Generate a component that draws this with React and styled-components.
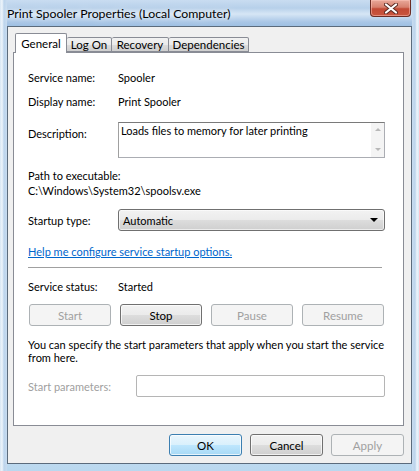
import React from 'react';
import styled, {createGlobalStyle} from 'styled-components';

const FONT = `Lato, "Noto Sans", "Liberation Sans", sans-serif`;

const GlobalStyle = createGlobalStyle`
  html, body {
    margin: 0;
    padding: 0;
    background: #ffffff;
  }
  body {
    font-family: ${FONT};
    font-size: 11px;
  }
`;

function App() {
    return (
        <Window>
            <GlobalStyle/>
            <TitleBar>
                <Title>Print Spooler Properties (Local Computer)</Title>
                <CloseButton>
                    <svg width="14" height="11" viewBox="0 0 14 11">
                        <path d="M2 1.5 L12 9.5 M12 1.5 L2 9.5" stroke="#5a2a22" strokeWidth="4" strokeLinecap="round"/>
                        <path d="M2 1.5 L12 9.5 M12 1.5 L2 9.5" stroke="#ffffff" strokeWidth="2.2" strokeLinecap="round"/>
                    </svg>
                </CloseButton>
            </TitleBar>

            <Client>
                <TabStrip>
                    <Tab $selected $width={52}>General</Tab>
                    <Tab $width={45}>Log On</Tab>
                    <Tab $width={57}>Recovery</Tab>
                    <Tab $width={80}>Dependencies</Tab>
                </TabStrip>

                <Panel>
                    <Row $top={17}>
                        <Label>Service name:</Label>
                        <Value>Spooler</Value>
                    </Row>
                    <Row $top={9}>
                        <Label>Display name:</Label>
                        <Value>Print Spooler</Value>
                    </Row>
                    <Row $top={13} $alignTop>
                        <Label style={{paddingTop: 4}}>Description:</Label>
                        <TextArea>
                            <span>Loads files to memory for later printing</span>
                            <ScrollBar>
                                <Arrow $up/>
                                <Arrow/>
                            </ScrollBar>
                        </TextArea>
                    </Row>
                    <Block $top={10}>
                        <Line>Path to executable:</Line>
                        <Line>C:\Windows\System32\spoolsv.exe</Line>
                    </Block>
                    <Row $top={11}>
                        <Label>Startup type:</Label>
                        <Select>
                            <span>Automatic</span>
                            <Caret/>
                        </Select>
                    </Row>
                    <Block $top={13}>
                        <HelpLink>Help me configure service startup options.</HelpLink>
                    </Block>
                    <Separator/>
                    <Row $top={11}>
                        <Label>Service status:</Label>
                        <Value>Started</Value>
                    </Row>
                    <ServiceButtons>
                        <Button disabled>Start</Button>
                        <Button>Stop</Button>
                        <Button disabled>Pause</Button>
                        <Button disabled>Resume</Button>
                    </ServiceButtons>
                    <Paragraph>
                        You can specify the start parameters that apply when you start the service
                        from here.
                    </Paragraph>
                    <Row $top={11}>
                        <Label $width={108} $disabled>Start parameters:</Label>
                        <Input/>
                    </Row>
                </Panel>

                <DialogButtons>
                    <Button $default>OK</Button>
                    <Button>Cancel</Button>
                    <Button disabled>Apply</Button>
                </DialogButtons>
            </Client>
        </Window>
    );
}

const Window = styled.div`
width: 419px;
height: 471px;
box-sizing: border-box;
display: flex;
flex-direction: column;
background:
    linear-gradient(90deg, #d7e6f4 0px, #eef5fb 2px, #bcd4ec 4px, #c8dcf0 7px, transparent 7px, transparent 412px, #c8dcf0 412px, #bcd4ec 415px, #eef5fb 417px, #d7e6f4 419px),
    linear-gradient(180deg, #c9dcf1 0px, #b7d0ea 8px, #d6e6f5 14px, #a9c6e6 22px, #9fc0e3 26px, #c3d9ef 60px, #c9ddf1 440px, #b9d8ef 471px);
font-family: ${FONT};
`;

const TitleBar = styled.div`
height: 26px;
flex-shrink: 0;
display: flex;
justify-content: space-between;
align-items: flex-start;
padding: 0 8px 0 7px;
`;

const Title = styled.div`
font-size: 12.3px;
line-height: 28px;
color: #000;
text-shadow: 0 0 8px rgba(255, 255, 255, 0.9);
`;

const CloseButton = styled.div`
width: 41px;
height: 17px;
box-sizing: border-box;
border: 1px solid #6b2d25;
border-top: 0;
border-radius: 0 0 4px 4px;
background: linear-gradient(180deg, #e9a99a 0%, #d7806e 45%, #c24a35 55%, #c9563f 100%);
box-shadow: inset 0 0 0 1px rgba(255, 200, 190, 0.5);
display: flex;
align-items: center;
justify-content: center;
`;

const Client = styled.div`
flex: 1;
margin: 0 7px 7px 7px;
border: 1px solid #5b6b7c;
background: #f0f0f0;
display: flex;
flex-direction: column;
padding: 6px 7px 7px 5px;
`;

const TabStrip = styled.div`
height: 19px;
display: flex;
align-items: flex-end;
padding-left: 2px;
position: relative;
z-index: 1;
`;

const Tab = styled.div`
width: ${p => p.$width}px;
height: ${p => p.$selected ? 20 : 15}px;
margin-bottom: ${p => p.$selected ? -1 : 0}px;
box-sizing: border-box;
border: 1px solid #898c95;
border-bottom: ${p => p.$selected ? 0 : 1}px solid #898c95;
border-left-width: ${p => p.$selected ? 1 : 0}px;
border-radius: 2px 2px 0 0;
background: ${p => p.$selected ? '#ffffff' : 'linear-gradient(180deg, #f2f2f2 0%, #ebebeb 50%, #dddddd 51%, #cfcfcf 100%)'};
font-size: 11.5px;
line-height: ${p => p.$selected ? 19 : 14}px;
text-align: center;
color: #000;
`;

const Panel = styled.div`
height: 374px;
box-sizing: border-box;
border: 1px solid #898c95;
background: #ffffff;
padding: 0 18px 0 14px;
display: flex;
flex-direction: column;
font-size: 11px;
color: #000;
`;

const Row = styled.div`
display: flex;
align-items: ${p => p.$alignTop ? 'flex-start' : 'center'};
margin-top: ${p => p.$top}px;
min-height: 15px;
line-height: 15px;
`;

const Label = styled.div`
width: ${p => p.$width || 90}px;
flex-shrink: 0;
color: ${p => p.$disabled ? '#a0a0a0' : '#000'};
`;

const Value = styled.div`
color: #000;
`;

const Block = styled.div`
margin-top: ${p => p.$top}px;
line-height: 15px;
`;

const Line = styled.div`
white-space: nowrap;
`;

const TextArea = styled.div`
width: 267px;
height: 36px;
box-sizing: border-box;
border: 1px solid #abadb3;
border-top-color: #7a7a7a;
border-left-color: #a0a0a0;
background: #fff;
display: flex;
justify-content: space-between;
padding-left: 2px;
line-height: 14px;

span {
    padding-top: 1px;
}
`;

const ScrollBar = styled.div`
width: 13px;
background: #f4f4f4;
display: flex;
flex-direction: column;
justify-content: space-between;
align-items: center;
padding: 5px 0 6px;
box-sizing: border-box;
`;

const Arrow = styled.div`
width: 0;
height: 0;
border-left: 3px solid transparent;
border-right: 3px solid transparent;
${p => p.$up ? 'border-bottom: 3px solid #b8b8b8;' : 'border-top: 3px solid #b8b8b8;'}
`;

const Select = styled.div`
width: 267px;
height: 22px;
box-sizing: border-box;
border: 1px solid #707070;
border-radius: 3px;
background: linear-gradient(180deg, #f2f2f2 0%, #ebebeb 50%, #dddddd 51%, #cfcfcf 100%);
box-shadow: inset 0 0 0 1px rgba(255, 255, 255, 0.6);
display: flex;
align-items: center;
justify-content: space-between;
padding: 0 6px 0 4px;
`;

const Caret = styled.div`
width: 0;
height: 0;
border-left: 4px solid transparent;
border-right: 4px solid transparent;
border-top: 4px solid #000;
`;

const HelpLink = styled.a`
color: #0066cc;
text-decoration: underline;
cursor: pointer;
`;

const Separator = styled.div`
margin-top: 8px;
margin-right: 3px;
height: 0;
border-top: 1px solid #a0a0a0;
`;

const ServiceButtons = styled.div`
display: grid;
grid-template-columns: repeat(4, 82px);
column-gap: 9px;
margin: 10px 0 0 1px;
`;

const DialogButtons = styled.div`
margin-top: 8px;
display: flex;
justify-content: flex-end;
gap: 8px;

& > button {
    width: 73px;
}
`;

const Button = styled.button`
height: 22px;
box-sizing: border-box;
padding: 0;
font-family: ${FONT};
font-size: 11.5px;
color: #000;
border: 1px solid ${p => p.$default ? '#3c7fb1' : '#707070'};
border-radius: 3px;
background: ${p => p.$default
    ? 'linear-gradient(180deg, #eaf6fd 0%, #d9f0fc 50%, #bee6fd 51%, #a7d9f5 100%)'
    : 'linear-gradient(180deg, #f2f2f2 0%, #ebebeb 50%, #dddddd 51%, #cfcfcf 100%)'};
box-shadow: inset 0 0 0 1px rgba(255, 255, 255, 0.7);

&:disabled {
    color: #a0a0a0;
    border-color: #adb2b5;
    background: #f4f4f4;
    box-shadow: none;
}
`;

const Paragraph = styled.p`
margin: 12px 0 0 0;
line-height: 13px;
padding-right: 0;
`;

const Input = styled.div`
width: 249px;
height: 22px;
box-sizing: border-box;
border: 1px solid #b5b5b5;
border-radius: 2px;
background: #fff;
`;

export default App;
